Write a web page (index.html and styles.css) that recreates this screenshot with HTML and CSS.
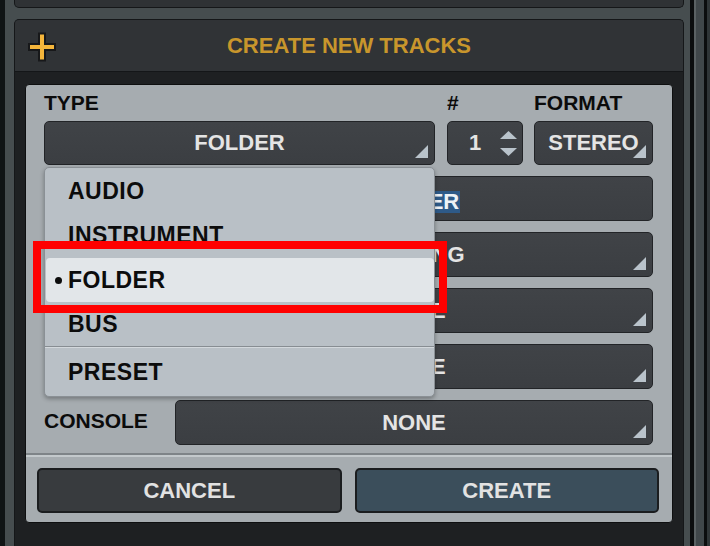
FILE: index.html
```html
<!DOCTYPE html>
<html>
<head>
<meta charset="utf-8">
<link rel="stylesheet" href="styles.css">
</head>
<body>
<div class="app">
  <div class="edge-l"></div>
  <div class="win">
    <div class="prev"></div>
    <div class="panel">
      <div class="hdr">
        <svg class="plus" width="28" height="30" viewBox="0 0 28 30"><path d="M11 1.5h6v10.5h10v6H17v10.5h-6V18H1v-6h10z" fill="#f5b63b" stroke="#17181a" stroke-width="2"/></svg>
        <div class="title">CREATE NEW TRACKS</div>
        <div></div>
      </div>
      <div class="dialog">
        <div class="form">
          <div class="top">
            <div class="lbl">TYPE</div>
            <div class="lbl">#</div>
            <div class="lbl">FORMAT</div>
            <div class="field f-type">FOLDER<i class="tri"></i></div>
            <div class="field f-num"><span>1</span><svg width="17" height="25" viewBox="0 0 17 25"><path d="M8.5 0L17 8H0z M0 17h17l-8.5 8z" fill="#b9c3cb"/></svg></div>
            <div class="field f-fmt">STEREO<i class="tri"></i></div>
          </div>
          <div class="rows">
            <div class="lbl"></div>
            <div class="field"><span class="sel">FOLDER</span></div>
            <div class="lbl"></div>
            <div class="field">ROUTING<i class="tri"></i></div>
            <div class="lbl"></div>
            <div class="field">NONE<i class="tri"></i></div>
            <div class="lbl"></div>
            <div class="field">NONE<i class="tri"></i></div>
            <div class="lbl">CONSOLE</div>
            <div class="field">NONE<i class="tri"></i></div>
          </div>
        </div>
        <div class="sep"></div>
        <div class="btns">
          <div class="btn">CANCEL</div>
          <div class="btn primary">CREATE</div>
        </div>
        <div class="menu">
          <div class="item">AUDIO</div>
          <div class="item">INSTRUMENT</div>
          <div class="item on">FOLDER</div>
          <div class="item">BUS</div>
          <div class="msep"></div>
          <div class="item">PRESET</div>
        </div>
        <div class="mark"></div>
      </div>
    </div>
  </div>
  <div class="edge-r">
    <div class="s1"></div><div class="s2"></div><div class="s3"></div><div class="s4"></div><div class="s5"></div>
  </div>
</div>
</body>
</html>
```
FILE: styles.css
```css
html, body { margin: 0; padding: 0; }
body {
  background: #101415;
  font-family: "Liberation Sans", Arial, sans-serif;
  font-weight: bold;
}
.app { display: flex; width: 710px; height: 546px; overflow: hidden; }
.edge-l { width: 5px; background: #101415; flex: none; }
.win {
  width: 670px; flex: none;
  background: #464d4f;
  padding: 0 6px 0 9px;
  display: flex; flex-direction: column;
}
.prev {
  height: 7px; flex: none;
  background: #2f3235;
  border: 1px solid #151719; border-top: none;
  border-radius: 0 0 5px 5px;
}
.panel {
  margin-top: 11px; flex: 1;
  background: #1e2022;
  border: 1px solid #151719; border-bottom: none;
  border-radius: 5px 5px 0 0;
}
.hdr {
  height: 51px;
  background: #303336;
  border-bottom: 1px solid #141618;
  border-radius: 4px 4px 0 0;
  display: grid; grid-template-columns: 1fr auto 1fr;
  align-items: center;
}
.plus { margin-left: 13px; margin-top: 2px; display: block; }
.title { color: #c8962c; font-size: 22px; }
.dialog {
  margin: 12px 10px 0 10px;
  background: #a6acb0;
  border: 1px solid #0e0f10;
  border-radius: 4px;
  position: relative;
}
.form { padding: 6px 0 0 18px; }
.lbl { font-size: 21px; line-height: 24px; color: #0b0b0b; }
.top {
  display: grid;
  grid-template-columns: 403px 87px 119px;
  grid-template-rows: 24px 44px;
  row-gap: 6px;
}
.field {
  box-sizing: border-box;
  background: linear-gradient(#404347, #3b3e42);
  border: 1px solid #222427;
  border-radius: 5px;
  color: #e4e4e4;
  font-size: 22px;
  display: flex; align-items: center; justify-content: center;
  position: relative;
}
.f-type { width: 391px; }
.f-num { width: 76px; justify-content: space-between; padding: 0 5px 0 21px; }
.f-num svg { display: block; }
.f-fmt { width: 119px; }
.tri {
  position: absolute; right: 6px; bottom: 6px;
  width: 13px; height: 13px;
  background: #b9c3cb;
  clip-path: polygon(100% 0, 100% 100%, 0 100%);
}
.rows {
  display: grid;
  grid-template-columns: 131px 478px;
  grid-auto-rows: 45px;
  row-gap: 11px;
  margin-top: 11px;
}
.rows .lbl { align-self: center; padding-bottom: 4px; }
.sel { background: #2e5a88; color: #eef2f6; line-height: 22px; padding: 0 1px; margin-top: 6px; }
.sep { margin-top: 8px; height: 2px; background: #7e8488; border-bottom: 2px solid #c3c9cc; }
.btns { display: flex; gap: 13px; padding: 11px 13px 9px 11px; }
.btn {
  flex: 1; height: 45px; box-sizing: border-box;
  border: 2px solid #1b1d1f; border-radius: 5px;
  background: #383b3e; color: #e2e2e2;
  font-size: 22px;
  display: flex; align-items: center; justify-content: center;
}
.btn.primary { background: #3b4e5b; }
.menu {
  position: absolute; left: 18px; top: 82px;
  width: 391px; height: 230px; box-sizing: border-box;
  background: #b9c0c6;
  border: 1px solid #8a9095;
  border-radius: 5px;
  padding: 1px 0 4px;
  box-shadow: 0 2px 4px rgba(0,0,0,0.3);
}
.item {
  height: 44px;
  display: flex; align-items: center;
  padding-left: 23px;
  font-size: 23px; letter-spacing: 0.5px;
  color: #0c0c0c;
  position: relative;
}
.item.on {
  margin: 1px 0 0 1px; padding-left: 22px;
  background: #e2e6e9; border-radius: 4px;
}
.item.on::before {
  content: ""; position: absolute; left: 9px; top: 19px;
  width: 7px; height: 7px; border-radius: 50%; background: #0c0c0c;
}
.msep { height: 0; border-top: 1px solid #878d92; border-bottom: 1px solid #d3d8dc; margin-bottom: 2px; }
.mark {
  position: absolute; left: 7px; top: 156px;
  width: 414px; height: 72px; box-sizing: border-box;
  border: 8px solid #ff0000;
}
.edge-r { display: flex; flex: none; }
.edge-r div { height: 100%; }
.s1 { width: 4px; background: #0b0d0e; }
.s2 { width: 2px; background: #5a6163; }
.s3 { width: 8px; background: #40474a; }
.s4 { width: 3px; background: #0b0d0e; }
.s5 { width: 3px; background: #2f3537; }
```
